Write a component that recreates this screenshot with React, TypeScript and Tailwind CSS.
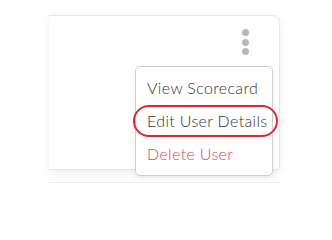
import React from "react";

const menuItems = [
  { label: "View Scorecard", danger: false, highlight: false },
  { label: "Edit User Details", danger: false, highlight: true },
  { label: "Delete User", danger: true, highlight: false },
];

const App: React.FC = () => {
  return (
    <div className="w-[332px] h-[232px] bg-white overflow-hidden font-['Lato',sans-serif]">
      <div className="pt-[15px] pl-[49px] pr-[52px]">
        <div className="relative h-[155px] flex justify-end items-start pt-[28px] pr-[30px] bg-white border-t border-r border-b border-[#e6e6e6] rounded-tr-[8px] rounded-br-[4px] shadow-[0_3px_8px_rgba(0,0,0,0.07)]">
          <div className="flex flex-col gap-[2.5px] -mt-[15px]">
            <span className="block w-[7px] h-[7px] rounded-full bg-[#b4b9bd]" />
            <span className="block w-[7px] h-[7px] rounded-full bg-[#b4b9bd]" />
            <span className="block w-[7px] h-[7px] rounded-full bg-[#b4b9bd]" />
          </div>

          <div className="absolute left-[86px] top-[50px] z-10 w-[138px] h-[110px] bg-white border border-[#cfcfcf] rounded-[5px] shadow-[0_2px_6px_rgba(0,0,0,0.08)] py-[4px]">
            {menuItems.map((item) => (
              <div
                key={item.label}
                className={`relative h-[33px] flex items-center pl-[11px] text-[16px] font-light tracking-[0.35px] ${
                  item.danger ? "text-[#d9474a]" : "text-[#333333]"
                }`}
              >
                {item.label}
                {item.highlight && (
                  <span className="absolute left-[-3px] top-[1px] w-[145px] h-[32px] border-2 border-[#e3262a] rounded-full" />
                )}
              </div>
            ))}
          </div>
        </div>
        <div className="mt-[12px] h-[40px] border-t border-[#ececec]" />
      </div>
    </div>
  );
};

export default App;
